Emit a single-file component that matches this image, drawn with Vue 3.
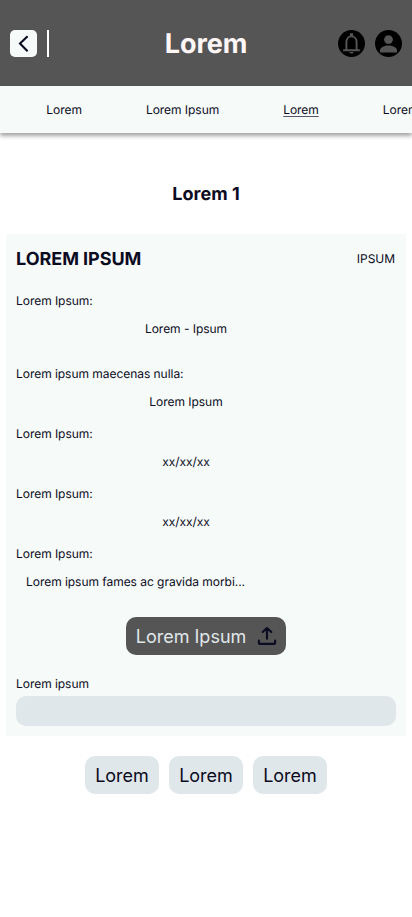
<script setup>
const tabs = [
  { label: 'Lorem' },
  { label: 'Lorem Ipsum' },
  { label: 'Lorem', active: true },
  { label: 'Lorem' },
]

const fields = [
  { label: 'Lorem Ipsum:', value: 'Lorem - Ipsum', spaced: true },
  { label: 'Lorem ipsum maecenas nulla:', value: 'Lorem Ipsum' },
  { label: 'Lorem Ipsum:', value: 'xx/xx/xx' },
  { label: 'Lorem Ipsum:', value: 'xx/xx/xx' },
  { label: 'Lorem Ipsum:', value: 'Lorem ipsum fames ac gravida morbi...', start: true },
]

const actions = ['Lorem', 'Lorem', 'Lorem']
</script>

<template>
  <div class="screen">
    <header class="topbar">
      <div class="side">
        <button class="back" aria-label="Back">
          <svg width="27" height="27" viewBox="0 0 27 27">
            <path d="M17.6 6.2 10 13.6l7.6 7.6" fill="none" stroke="#0b0b22" stroke-width="2.1" />
          </svg>
        </button>
        <span class="divider"></span>
      </div>
      <h1 class="title">Lorem</h1>
      <div class="side end">
        <svg width="27" height="27" viewBox="0 0 27 27">
          <circle cx="13.5" cy="13.5" r="13.5" fill="#000" />
          <path d="M8.4 20v-7.6c0-3.4 2-6 5.1-6s5.1 2.6 5.1 6V20" fill="none" stroke="#555" stroke-width="1.9" />
          <path d="M5.2 19.3h16.6v1.9H5.2zM11.9 3.2h3.2v3.4h-3.2zM11.3 21.9h4.4a2.2 1.7 0 0 1-4.4 0z" fill="#555" />
        </svg>
        <svg width="27" height="27" viewBox="0 0 27 27">
          <circle cx="13.5" cy="13.5" r="13.5" fill="#000" />
          <circle cx="13.5" cy="9.6" r="4.4" fill="#555" />
          <path d="M5 22.4v-1.9c0-3 4.8-4.9 8.5-4.9s8.5 1.9 8.5 4.9v1.9z" fill="#555" />
        </svg>
      </div>
    </header>

    <nav class="tabs">
      <a v-for="(tab, i) in tabs" :key="i" class="tab" :class="{ active: tab.active }">{{ tab.label }}</a>
    </nav>

    <main>
      <h2 class="heading">Lorem 1</h2>

      <section class="card">
        <div class="card-head">
          <h3>LOREM IPSUM</h3>
          <span>IPSUM</span>
        </div>

        <div class="fields">
          <div v-for="(field, i) in fields" :key="i" class="field" :class="{ spaced: field.spaced }">
            <div class="label">{{ field.label }}</div>
            <div class="value" :class="{ start: field.start }">{{ field.value }}</div>
          </div>
        </div>

        <button class="upload">
          <span>Lorem Ipsum</span>
          <svg width="20" height="20" viewBox="0 0 20 20" fill="none" stroke="#0b0b22" stroke-width="2.1" stroke-linecap="round" stroke-linejoin="round">
            <path d="M10 12.8V2.2M5.7 6 10 1.9 14.3 6M1.9 14.6v2.5c0 .5.3.8.8.8h14.6c.5 0 .8-.3.8-.8v-2.5" />
          </svg>
        </button>

        <label class="note">
          <span>Lorem ipsum</span>
          <input type="text" />
        </label>
      </section>

      <div class="actions">
        <button v-for="(action, i) in actions" :key="i" class="action">{{ action }}</button>
      </div>
    </main>
  </div>
</template>

<style>
body {
  background: #fff;
}
</style>

<style scoped>
.screen {
  width: 100%;
  height: 917px;
  overflow: hidden;
  font-family: Inter, sans-serif;
  font-size: 12px;
  line-height: 15px;
  letter-spacing: -0.04px;
  text-rendering: geometricPrecision;
  color: #0b0b22;
}

button,
input {
  border: 0;
  padding: 0;
  margin: 0;
  font: inherit;
  color: inherit;
}

h1,
h2,
h3 {
  margin: 0;
}

svg {
  display: block;
}

.topbar {
  display: grid;
  grid-template-columns: 1fr auto 1fr;
  align-items: center;
  height: 86px;
  padding: 0 10px;
  box-sizing: border-box;
  background: #555;
}

.side {
  display: flex;
  align-items: center;
  gap: 10px;
}

.end {
  justify-content: flex-end;
}

.back {
  width: 27px;
  height: 27px;
  border-radius: 5px;
  background: #f6faf9;
}

.divider {
  width: 2px;
  height: 27px;
  background: #fff;
}

.title {
  font-size: 27px;
  line-height: 33px;
  font-weight: 700;
  color: #fff6f6;
}

.tabs {
  display: flex;
  align-items: center;
  gap: 64px;
  height: 47px;
  padding-left: 46.3px;
  background: #f6faf9;
  box-shadow: 0 3px 4px rgba(0, 0, 0, 0.35);
  white-space: nowrap;
}

.tab {
  flex: none;
}

.active {
  text-decoration: underline;
  text-decoration-color: #55566a;
  text-underline-offset: 2px;
}

.heading {
  margin: 51px 0 28px;
  font-size: 18px;
  line-height: 22px;
  font-weight: 700;
  letter-spacing: 0;
  text-align: center;
}

.card {
  display: flex;
  flex-direction: column;
  margin: 0 6px;
  padding: 10px;
  background: #f6faf9;
}

.card-head {
  display: flex;
  justify-content: space-between;
  align-items: center;
  height: 29px;
  padding-right: 1px;
}

.card-head h3 {
  margin-top: 2px;
  font-size: 18px;
  line-height: 23px;
  font-weight: 700;
}

.fields {
  display: flex;
  flex-direction: column;
  gap: 17px;
  width: 340px;
  margin-top: 20px;
}

.value {
  margin-top: 13px;
  text-align: center;
}

.value.start {
  padding-left: 10px;
  text-align: left;
}

.spaced {
  margin-bottom: 13px;
}

.upload {
  display: flex;
  align-items: center;
  justify-content: space-between;
  align-self: center;
  width: 160.5px;
  height: 38px;
  margin-top: 28px;
  padding: 0 9px 0 10px;
  box-sizing: border-box;
  border-radius: 10px;
  background: #555;
  color: #e0e7ea;
  font-size: 18px;
}

.note {
  display: flex;
  flex-direction: column;
  gap: 5px;
  margin-top: 21px;
}

.note input {
  height: 30px;
  border-radius: 10px;
  background: #e0e7ea;
}

.actions {
  display: flex;
  justify-content: center;
  gap: 10px;
  margin-top: 20px;
}

.action {
  width: 74px;
  height: 38px;
  border-radius: 10px;
  background: #e0e7ea;
  font-size: 18px;
}
</style>
